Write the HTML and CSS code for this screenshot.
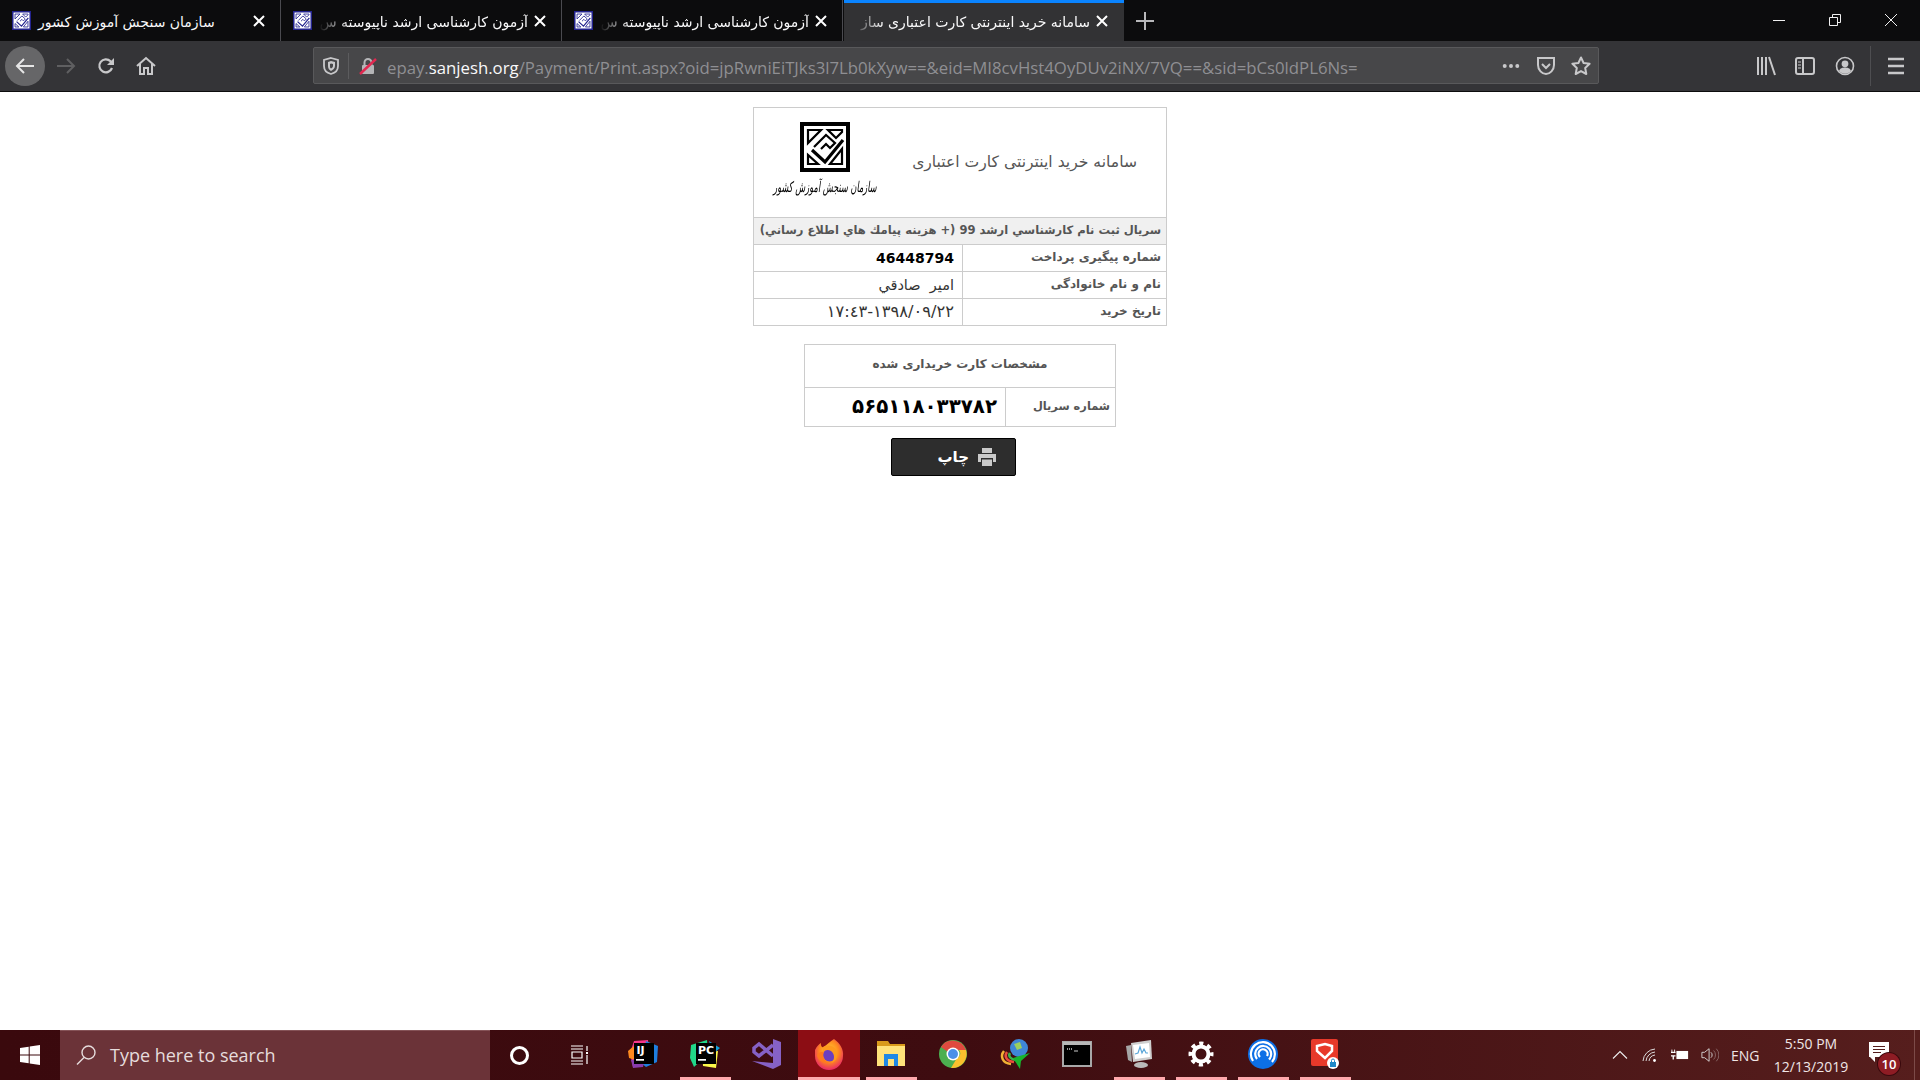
FILE: index.html
```html
<!DOCTYPE html>
<html lang="fa">
<head>
<meta charset="utf-8">
<title>سامانه خرید اینترنتی کارت اعتباری</title>
<link rel="stylesheet" href="styles.css">
</head>
<body>
<svg class="defs" width="0" height="0" aria-hidden="true">
  <defs>
    <symbol id="mark" viewBox="0 0 50 50">
      <path fill="currentColor" fill-rule="evenodd" d="M0 0H50V50H0ZM4 4V46H46V4Z"/>
      <g fill="none" stroke="currentColor" stroke-width="2.200">
        <path d="M8 8V21L21 8Z"/>
        <path d="M28 8H42V10L36 16Z"/>
        <path d="M8 33V42H18Z"/>
        <path d="M42 27V42H30Z"/>
        <path d="M14 25 26 13 35 21 30 26 26 22 21 27"/>
        <path stroke-width="3.200" d="M12 28 25 40 43 18"/>
      </g>
    </symbol>
    <symbol id="close" viewBox="0 0 16 16">
      <path fill="none" stroke="currentColor" stroke-width="2" d="M3 3 13 13M13 3 3 13"/>
    </symbol>
    <radialGradient id="ffg" cx="50%" cy="40%" r="62%">
      <stop offset="0" stop-color="#ffd43b"/>
      <stop offset=".55" stop-color="#ff8a1e"/>
      <stop offset="1" stop-color="#e8226c"/>
    </radialGradient>
  </defs>
</svg>

<header class="tabs">
  <div class="tab">
    <svg class="favicon"><use href="#mark"/></svg>
    <div class="label label-short">سازمان سنجش آموزش کشور</div>
    <svg class="tab-close"><use href="#close"/></svg>
  </div>
  <div class="tab">
    <svg class="favicon"><use href="#mark"/></svg>
    <div class="label label-fade">آزمون کارشناسی ارشد ناپیوسته س</div>
    <svg class="tab-close"><use href="#close"/></svg>
  </div>
  <div class="tab">
    <svg class="favicon"><use href="#mark"/></svg>
    <div class="label label-fade">آزمون کارشناسی ارشد ناپیوسته س</div>
    <svg class="tab-close"><use href="#close"/></svg>
  </div>
  <div class="tab tab-active">
    <div class="label label-fade">سامانه خرید اینترنتی کارت اعتباری ساز</div>
    <svg class="tab-close"><use href="#close"/></svg>
  </div>
  <svg class="new-tab" viewBox="0 0 18 18"><path fill="none" stroke="currentColor" stroke-width="2" d="M9 0V18M0 9H18"/></svg>
  <div class="win-controls">
    <svg class="win-btn" viewBox="0 0 12 12"><path stroke="currentColor" stroke-width="1" d="M0 6.500H12"/></svg>
    <svg class="win-btn" viewBox="0 0 12 12"><path fill="none" stroke="currentColor" stroke-width="1" d="M.5 3.500H8.500V11.500H.5ZM3.500 3.500V.5H11.500V8.500H8.500"/></svg>
    <svg class="win-btn" viewBox="0 0 12 12"><path fill="none" stroke="currentColor" stroke-width="1" d="M0 0 12 12M12 0 0 12"/></svg>
  </div>
</header>

<nav class="toolbar">
  <div class="tb-btn tb-back">
    <svg class="ico" viewBox="0 0 20 20"><path fill="none" stroke="#e6e6e6" stroke-width="2" d="M19 10H2M9 3 2 10 9 17"/></svg>
  </div>
  <div class="tb-btn">
    <svg class="ico" viewBox="0 0 20 20"><path fill="none" stroke="#5f5f61" stroke-width="2" d="M1 10H18M11 3 18 10 11 17"/></svg>
  </div>
  <div class="tb-btn">
    <svg class="ico" viewBox="0 0 20 20"><path fill="none" stroke="#c8c8ca" stroke-width="2.200" d="M16 12A6.500 6.500 0 1 1 14.500 5.200L17 7.500"/><path fill="#c8c8ca" d="M18 2V9H11Z"/></svg>
  </div>
  <div class="tb-btn tb-home">
    <svg class="ico" viewBox="0 0 20 20"><path fill="none" stroke="#c8c8ca" stroke-width="2" d="M1 10 10 2 19 10M4 8V18H8V12H12V18H16V8"/></svg>
  </div>
  <div class="urlbar">
    <div class="ub-shield">
      <svg class="ico-s" viewBox="0 0 16 18"><path fill="none" stroke="#c8c8ca" stroke-width="1.800" d="M8 1 15 3V9C15 13 12 16 8 17 4 16 1 13 1 9V3Z"/><path fill="#c8c8ca" d="M8 4 12 5V9C12 11 10 13 8 14 6 13 5 11 5 9V5Z"/><path fill="#474749" d="M8 6.500 10 7V9C10 10 9 11 8 11.500 7 11 7 10 7 9V7Z"/></svg>
    </div>
    <div class="ub-lock">
      <svg class="ico-s" viewBox="0 0 18 18"><rect x="3" y="8" width="12" height="9" rx="1" fill="#b5b5b7"/><path fill="none" stroke="#b5b5b7" stroke-width="2" d="M5.500 8V5.500A3.500 3.500 0 0 1 12.500 5.500V8"/><path stroke="#e22850" stroke-width="2.400" d="M1 17 17 2"/></svg>
    </div>
    <div class="url"><span class="url-dim">epay.</span><span class="url-host">sanjesh.org</span><span class="url-dim">/Payment/Print.aspx?oid=jpRwniEiTJks3l7Lb0kXyw==&amp;eid=MI8cvHst4OyDUv2iNX/7VQ==&amp;sid=bCs0ldPL6Ns=</span></div>
    <div class="ub-act">
      <svg class="ico-s" viewBox="0 0 20 6"><g fill="#c8c8ca"><circle cx="3" cy="3" r="2.200"/><circle cx="10" cy="3" r="2.200"/><circle cx="17" cy="3" r="2.200"/></g></svg>
    </div>
    <div class="ub-act">
      <svg class="ico" viewBox="0 0 20 20"><path fill="none" stroke="#c8c8ca" stroke-width="2" d="M2 2H18V9C18 14 14 18 10 18 6 18 2 14 2 9Z"/><path fill="none" stroke="#c8c8ca" stroke-width="2" d="M6 8 10 12 14 8"/></svg>
    </div>
    <div class="ub-act">
      <svg class="ico" viewBox="0 0 20 20"><path fill="none" stroke="#c8c8ca" stroke-width="2" stroke-linejoin="round" d="M10 1.500 12.600 7 18.600 7.800 14.200 12 15.300 18 10 15.100 4.700 18 5.800 12 1.400 7.800 7.400 7Z"/></svg>
    </div>
  </div>
  <div class="tb-right">
    <div class="tb-btn-r">
      <svg class="ico" viewBox="0 0 20 20"><path fill="none" stroke="#c8c8ca" stroke-width="2" d="M2 1V19M6 1V19M10 1V19M13 1 19 19"/></svg>
    </div>
    <div class="tb-btn-r">
      <svg class="ico" viewBox="0 0 20 20"><rect x="1" y="2" width="18" height="16" rx="2" fill="none" stroke="#c8c8ca" stroke-width="2"/><path stroke="#c8c8ca" stroke-width="2" d="M8 2V18"/><path stroke="#c8c8ca" d="M3 6H6M3 9H6M3 12H6"/></svg>
    </div>
    <div class="tb-btn-r">
      <svg class="ico" viewBox="0 0 20 20"><circle cx="10" cy="10" r="8.500" fill="none" stroke="#c8c8ca" stroke-width="1.600"/><circle cx="10" cy="7.800" r="3.400" fill="#c8c8ca"/><path fill="#c8c8ca" d="M4 15C5 12 7.500 11.500 10 11.500S15 12 16 15C14.500 17 12 17.700 10 17.700S5.500 17 4 15Z"/></svg>
    </div>
    <div class="tb-sep"></div>
    <div class="tb-menu">
      <svg class="ico" viewBox="0 0 20 20"><path stroke="#c8c8ca" stroke-width="2.400" d="M2 3H18M2 10H18M2 17H18"/></svg>
    </div>
  </div>
</nav>

<main class="page">
  <table class="info">
    <colgroup><col class="col-lab-1"><col></colgroup>
    <tbody>
      <tr class="row-head">
        <td colspan="2">
          <div class="head-flex">
            <div class="head-title">سامانه خرید اینترنتی کارت اعتباری</div>
            <div class="logo">
              <svg class="logo-mark"><use href="#mark"/></svg>
              <div class="logo-text">سازمان سنجش آموزش کشور</div>
            </div>
          </div>
        </td>
      </tr>
      <tr class="row-title"><td colspan="2">سريال ثبت نام كارشناسي ارشد 99 (+ هزينه پيامك هاي اطلاع رساني)</td></tr>
      <tr class="row">
        <td class="lab lab-1">شماره پیگیری پرداخت</td>
        <td class="val val-bold">46448794</td>
      </tr>
      <tr class="row">
        <td class="lab lab-1">نام و نام خانوادگی</td>
        <td class="val">امير &nbsp;صادقي</td>
      </tr>
      <tr class="row">
        <td class="lab lab-1">تاریخ خرید</td>
        <td class="val"><span class="visual date">١٧:٤٣-١٣٩٨/٠٩/٢٢</span></td>
      </tr>
    </tbody>
  </table>

  <table class="card">
    <colgroup><col class="col-lab-2"><col></colgroup>
    <tbody>
      <tr class="card-head"><td colspan="2">مشخصات کارت خریداری شده</td></tr>
      <tr class="card-row">
        <td class="lab lab-2">شماره سریال</td>
        <td class="val-serial"><span class="visual">۵۶۵۱۱۸۰۳۳۷۸۲</span></td>
      </tr>
    </tbody>
  </table>

  <button class="print" type="button">
    <svg class="print-ico" viewBox="0 0 20 20"><path fill="#c9c9c9" d="M5 1H15V6H5ZM1 7H19V15H16V11H4V15H1ZM5 12.500H15V19H5Z"/></svg>
    <span>چاپ</span>
  </button>
</main>

<footer class="taskbar">
  <div class="start">
    <svg class="win-logo" viewBox="0 0 20 20"><path fill="#fff" d="M0 3 8.700 1.700V9.500H0ZM9.700 1.500 20 0V9.500H9.700ZM0 10.500H8.700V18.300L0 17ZM9.700 10.500H20V20L9.700 18.500Z"/></svg>
  </div>
  <div class="search">
    <svg class="search-ico" viewBox="0 0 20 20"><circle cx="12.500" cy="7.500" r="6.500" fill="none" stroke="#e6dcdc" stroke-width="1.400"/><path stroke="#e6dcdc" stroke-width="1.400" d="M8 12.500 1 19.500"/></svg>
    <span>Type here to search</span>
  </div>
  <div class="cortana"><span class="ring"></span></div>
  <div class="taskview">
    <svg class="tv-ico" viewBox="0 0 20 20"><path fill="none" stroke="#fff" stroke-width="1.200" d="M1 1H13M1 4H13M2 7H12V13H2ZM1 16H13M1 19H13M17 1V6M17 10V19"/><path stroke="#fff" stroke-width="2" d="M16 8H18"/></svg>
  </div>
  <div class="apps">
    <div class="app">
      <div class="app-ico">
        <svg class="tile" viewBox="0 0 32 32"><path fill="#f5368a" d="M7 3 21 2 22 14 6 29 3 15Z"/><path fill="#fd8a1f" d="M1 13 7 8 8 22 2 20Z"/><path fill="#1e7fe0" d="M19 3 31 8 30 24 19 29 14 25Z"/><path fill="#8a3cae" d="M4 22 18 20 16 29 6 30Z"/><rect x="7" y="5" width="20" height="21" fill="#000"/><text class="tile-txt" x="9.500" y="16">IJ</text><rect x="9" y="21" width="8" height="1.700" fill="#fff"/></svg>
      </div>
      <span class="ind ind-none"></span>
    </div>
    <div class="app">
      <div class="app-ico">
        <svg class="tile" viewBox="0 0 32 32"><path fill="#21d789" d="M2 7 18 2 19 16 5 29 1 20Z"/><path fill="#fcf84a" d="M13 15 29 13 27 30 14 28Z"/><path fill="#12a0d8" d="M20 3 31 10 24 16Z"/><rect x="7" y="5" width="20" height="21" fill="#000"/><text class="tile-txt" x="9" y="16">PC</text><rect x="9" y="21" width="8" height="1.700" fill="#fff"/></svg>
      </div>
      <span class="ind"></span>
    </div>
    <div class="app">
      <div class="app-ico">
        <svg class="tile" viewBox="0 0 32 32"><path fill="#8661c5" d="M22 1 30 4V27L22 31 1 23 22 25Z"/><path fill="none" stroke="#8661c5" stroke-width="3.500" d="M22 7 8 18 3 14V10L8 6 22 18"/></svg>
      </div>
      <span class="ind ind-none"></span>
    </div>
    <div class="app app-active">
      <div class="app-ico">
        <svg class="tile" viewBox="0 0 32 32"><path fill="url(#ffg)" d="M2 12C4 8 6 6 8 5 7.500 8 9 10 11 9 14 6 17 4 21 1 27 5 31 12 30 18A14 14 0 0 1 2 18C2 16 2 14 2 12Z"/><circle cx="16.500" cy="17" r="6.500" fill="#6b3fc0"/><path fill="#ff9a1e" d="M10 9C15 6 23 8 24 14 25 20 22 24 18 25 22 22 22 16 18 13 15 11 12 12 10 14Z"/><path fill="#ff7a1e" d="M4 17C6 14 9 13 11 14 9 18 11 23 16 25 11 26 5 23 4 17Z"/></svg>
      </div>
      <span class="ind"></span>
    </div>
    <div class="app">
      <div class="app-ico">
        <svg class="tile" viewBox="0 0 32 32"><path fill="#d99a1b" d="M2 3H13L15 6H30V27H2Z"/><path fill="#ffe27a" d="M2 8H30V28H2Z"/><path fill="#1e88e5" d="M9 16H23V28H19V21H13V28H9Z"/></svg>
      </div>
      <span class="ind"></span>
    </div>
    <div class="app">
      <div class="app-ico">
        <svg class="tile" viewBox="0 0 32 32"><circle cx="16" cy="16" r="14" fill="#4caf50"/><path fill="#e04a3f" d="M4 9A14 14 0 0 1 29 12H16A5 5 0 0 0 11 14Z"/><path fill="#fbc02d" d="M29 12A14 14 0 0 1 14 30L20 20A5 5 0 0 0 22 12Z"/><circle cx="16" cy="16" r="6.500" fill="#fff"/><circle cx="16" cy="16" r="5" fill="#4a90e8"/></svg>
      </div>
      <span class="ind ind-none"></span>
    </div>
    <div class="app">
      <div class="app-ico">
        <svg class="tile" viewBox="0 0 32 32"><path fill="none" stroke="#f2b134" stroke-width="2.500" d="M12 26C3 25 1 18 5 13"/><path fill="none" stroke="#e84d3d" stroke-width="2.500" d="M15 24C7 23 5 18 8 14"/><path fill="none" stroke="#3bb44a" stroke-width="2.500" d="M17 22C11 21 9 18 11 15"/><circle cx="20" cy="10" r="9" fill="#3f87d6"/><path fill="#9ccf5e" d="M15 6 21 4 23 10 18 12Z"/><path fill="#18b52e" d="M31 15 14 20 21 31 22 23Z"/></svg>
      </div>
      <span class="ind ind-none"></span>
    </div>
    <div class="app">
      <div class="app-ico">
        <svg class="tile" viewBox="0 0 32 32"><rect x="2" y="4" width="28" height="24" fill="#000" stroke="#a8a8a8" stroke-width="2"/><rect x="2" y="4" width="28" height="3" fill="#b8b8b8"/><path stroke="#ccc" stroke-width="1.500" stroke-dasharray="1 1" d="M6 11H12"/><path stroke="#ccc" stroke-width="1" d="M13 13H17"/></svg>
      </div>
      <span class="ind ind-none"></span>
    </div>
    <div class="app">
      <div class="app-ico">
        <svg class="tile" viewBox="0 0 32 32"><path fill="#cfcfcf" d="M8 5 28 2 29 21 10 24Z"/><path fill="#fff" d="M10 7 26 5 27 19 12 21Z"/><path fill="none" stroke="#5aa6d8" stroke-width="1.200" d="M12 16 15 15 17 9 19 15 21 11 23 15 25 15"/><path fill="#a6a6a6" d="M3 8 8 7 9 24 5 22Z"/><ellipse cx="18" cy="27" rx="7" ry="3" fill="#b9b9b9"/></svg>
      </div>
      <span class="ind"></span>
    </div>
    <div class="app">
      <div class="app-ico">
        <svg class="tile" viewBox="0 0 32 32"><circle cx="16" cy="16" r="7.500" fill="none" stroke="#fff" stroke-width="4"/><circle cx="16" cy="16" r="10.500" fill="none" stroke="#fff" stroke-width="4" stroke-dasharray="4.120 4.120" stroke-dashoffset="2.060"/></svg>
      </div>
      <span class="ind"></span>
    </div>
    <div class="app">
      <div class="app-ico">
        <svg class="tile" viewBox="0 0 32 32"><circle cx="16" cy="16" r="15" fill="#0d6fe6"/><g fill="none" stroke="#fff" stroke-width="2.200"><path d="M6 23A12 12 0 1 1 25 24"/><path d="M10 21A8 8 0 1 1 22 21.500"/><path d="M13 19A4.500 4.500 0 1 1 20 18"/></g></svg>
      </div>
      <span class="ind"></span>
    </div>
    <div class="app">
      <div class="app-ico">
        <svg class="tile" viewBox="0 0 32 32"><rect x="2" y="1" width="27" height="27" rx="2" fill="#e8392a"/><path fill="none" stroke="#fff" stroke-width="2.500" d="M16 20 8 13 8 8 16 6 23 8V13Z"/><circle cx="24" cy="25" r="6" fill="#fff"/><rect x="21" y="24" width="6" height="5" fill="#1e88c8"/><path fill="none" stroke="#1e88c8" d="M22.500 24V22.500A1.500 1.500 0 0 1 25.500 22.500V24"/></svg>
      </div>
      <span class="ind"></span>
    </div>
  </div>
  <div class="tray">
    <svg class="tray-ico" viewBox="0 0 16 16"><path fill="none" stroke="#eee" stroke-width="1.100" d="M1 11.500 8 4.500 15 11.500"/></svg>
    <svg class="tray-ico tray-gap" viewBox="0 0 16 16"><g fill="none" stroke="#ddd"><path d="M1 14A13 13 0 0 1 13 2"/><path d="M4 14A10 10 0 0 1 13 5"/><path d="M7 14A7 7 0 0 1 13 8"/></g><circle cx="12.500" cy="13.500" r="1.400" fill="#fff"/></svg>
    <svg class="tray-ico tray-gap" viewBox="0 0 20 16"><rect x="6" y="3.500" width="13" height="9" fill="#fff"/><path stroke="#fff" stroke-width="1.500" d="M0 5H5M0 9H5M2.500 9V13"/><path stroke="#fff" d="M1 2V5M4 2V5"/></svg>
    <svg class="tray-ico tray-gap" viewBox="0 0 20 16"><path fill="none" stroke="#ddd" d="M1 5H4L9 1V15L4 11H1ZM11 5A4 4 0 0 1 11 11"/><path fill="none" stroke="#8a6a6a" d="M14 3A7 7 0 0 1 14 13M17 1A10 10 0 0 1 17 15"/></svg>
    <span class="eng">ENG</span>
    <div class="clock">
      <span>5:50 PM</span>
      <span>12/13/2019</span>
    </div>
    <div class="notif">
      <svg class="notif-ico" viewBox="0 0 20 20"><path fill="#fff" fill-rule="evenodd" d="M0 0H20V15H6L6 20 1 15H0ZM4 4V5H16V4ZM4 7V8H16V7ZM4 10V11H12V10Z"/></svg>
      <span class="badge">10</span>
    </div>
    <div class="show-desktop"></div>
  </div>
</footer>
</body>
</html>
```

FILE: styles.css
```css
* { box-sizing: border-box; }
html, body { margin: 0; padding: 0; height: 100%; }
body {
  width: 1920px;
  height: 1080px;
  display: flex;
  flex-direction: column;
  overflow: hidden;
  background: #fff;
  font-family: "DejaVu Sans", sans-serif;
}
.defs { position: absolute; }

/* tabs */
.tabs {
  height: 41px;
  flex: none;
  display: flex;
  align-items: stretch;
  background: #0c0c0d;
  color: #f9f9fa;
}
.tab {
  width: 281px;
  display: flex;
  align-items: center;
  padding: 2px 13px 0 12px;
  border-right: 1px solid #4a4a4f;
  flex: none;
}
.favicon {
  width: 19px;
  height: 19px;
  flex: none;
  color: #23238e;
  background: #fff;
  margin-top: -3px;
}
.label {
  flex: 1;
  min-width: 0;
  margin: 0 4px 0 7px;
  direction: rtl;
  white-space: nowrap;
  font-size: 14px;
  line-height: 24px;
}
.label-short { text-align: left; }
.label-fade {
  -webkit-mask-image: linear-gradient(to right, transparent 0, #000 30px);
  mask-image: linear-gradient(to right, transparent 0, #000 30px);
}
.tab-close { width: 16px; height: 16px; flex: none; color: #fff; margin-top: -2px; }
.tab-active {
  width: 280px;
  margin-left: 1px;
  background: #323234;
  border-top: 3px solid #0a84ff;
  border-right: 0;
  padding: 0 14px 0 9px;
}
.tab-active .label { margin-left: 0; }
.new-tab { width: 18px; height: 18px; margin: 12px 0 0 12px; color: #b8b8ba; flex: none; }
.win-controls { margin-left: auto; display: flex; align-items: center; padding: 0 23px 0 0; gap: 44px; }
.win-btn { width: 12px; height: 12px; color: #f0f0f0; margin-top: -2px; }

/* toolbar */
.toolbar {
  height: 51px;
  flex: none;
  display: flex;
  align-items: center;
  padding: 0 0 1px 5px;
  background: #343437;
  border-bottom: 1px solid #0c0c0d;
}
.tb-btn {
  width: 40.500px;
  height: 40px;
  flex: none;
  display: flex;
  align-items: center;
  justify-content: center;
}
.tb-back { border-radius: 50%; background: #666668; width: 40px; margin-right: .5px; }
.tb-home { padding-right: 2px; }
.ico { width: 20px; height: 20px; }
.ico-s { width: 18px; height: 18px; }
.urlbar {
  width: 1286px;
  height: 37px;
  margin-left: 146px;
  flex: none;
  display: flex;
  align-items: center;
  background: #474749;
  border: 1px solid #59595b;
  border-radius: 2px;
}
.ub-shield {
  width: 35px;
  height: 26px;
  display: flex;
  align-items: center;
  justify-content: center;
  padding-right: 1px;
  border-right: 1px solid #5c5c5e;
  flex: none;
}
.ub-lock { width: 38px; flex: none; display: flex; justify-content: center; padding-right: 1px; }
.url {
  flex: 1;
  min-width: 0;
  font-family: "Open Sans", sans-serif;
  font-size: 16.750px;
  white-space: nowrap;
  padding-top: 3px;
}
.url-dim { color: #8f8f93; }
.url-host { color: #f9f9fa; }
.ub-act { width: 35px; flex: none; display: flex; justify-content: center; align-items: center; }
.tb-right { display: flex; align-items: center; margin-left: 147px; }
.tb-btn-r { width: 39.500px; display: flex; justify-content: center; flex: none; }
.tb-sep { width: 1px; height: 40px; background: #4e4e51; margin-left: 5px; }
.tb-menu { width: 50px; display: flex; justify-content: center; flex: none; }

/* page */
.page {
  flex: 1;
  min-height: 0;
  display: flex;
  flex-direction: column;
  align-items: center;
  padding-top: 15px;
  direction: rtl;
  color: #555;
}
table { border-collapse: collapse; table-layout: fixed; }
td { border: 1px solid #ccc; padding: 0; }
.col-lab-1 { width: 204px; }
.col-lab-2 { width: 110px; }
.info { width: 414px; font-size: 12px; }
.row-head { height: 110px; }
.head-flex { display: flex; align-items: center; justify-content: space-between; padding: 0 29px 0 20px; }
.head-title { font-size: 15.600px; color: #555; padding-bottom: 2px; }
.logo { width: 102px; height: 82px; display: flex; flex-direction: column; align-items: center; padding-bottom: 5px; }
.logo-mark { width: 50px; height: 50px; color: #000; flex: none; }
.logo-text {
  margin-top: 3px;
  font-size: 8.200px;
  line-height: 24px;
  font-style: italic;
  color: #000;
  white-space: nowrap;
  transform: scaleY(1.800);
}
.row-title { height: 27px; background: #f0f0f0; font-weight: 700; font-size: 11.550px; }
.row-title td { padding: 0 5px 2px; white-space: nowrap; }
.row { height: 27px; }
.lab { font-weight: 700; font-size: 12px; }
.lab-1 { padding: 0 5px 2px 0; }
.val { padding-right: 8px; color: #333; font-size: 14.500px; }
.val-bold { color: #000; font-weight: 700; font-size: 14px; }
.visual { direction: ltr; unicode-bidi: bidi-override; display: inline-block; }
.date { font-size: 16.300px; line-height: 20px; }
.card { width: 312px; margin-top: 18px; font-size: 12px; }
.card-head { height: 43px; text-align: center; font-weight: 700; }
.card-head td { padding-bottom: 4px; }
.card-row { height: 39px; }
.lab-2 { padding: 0 5px 2px 0; font-size: 11.400px; }
.val-serial { padding-right: 8px; font-weight: 700; font-size: 19.800px; color: #000; line-height: 24px; }
.print {
  width: 125px;
  height: 38px;
  margin: 11px 13px 0 0;
  display: flex;
  align-items: center;
  justify-content: flex-start;
  gap: 8px;
  padding: 0 18px 0 0;
  border: 1px solid #000;
  border-radius: 2px;
  background: #2d2d2d;
  color: #fff;
  font-family: "DejaVu Sans", sans-serif;
  font-weight: 700;
  font-size: 15px;
}
.print-ico { width: 20px; height: 20px; flex: none; }

/* taskbar */
.taskbar {
  height: 50px;
  flex: none;
  display: flex;
  align-items: stretch;
  background: linear-gradient(to right, #3a090d 0, #3e0c10 50%, #561e1d 100%);
  color: #fff;
}
.start { width: 60px; flex: none; display: flex; align-items: center; justify-content: center; }
.win-logo { width: 20px; height: 20px; }
.search {
  width: 430px;
  flex: none;
  display: flex;
  align-items: center;
  padding: 0 0 2px 16px;
  gap: 14px;
  background: #6b3338;
  border-top: 1px solid #855357;
  color: #e6dcdc;
  font-family: "Open Sans", sans-serif;
  font-size: 18px;
}
.search-ico { width: 20px; height: 20px; flex: none; }
.cortana { width: 58px; flex: none; display: flex; align-items: center; justify-content: center; }
.ring { width: 19px; height: 19px; border: 3px solid #fff; border-radius: 50%; }
.taskview { width: 64px; flex: none; display: flex; align-items: center; justify-content: center; }
.tv-ico { width: 20px; height: 20px; }
.apps { display: flex; flex: none; }
.app { width: 62px; flex: none; display: flex; flex-direction: column; align-items: center; }
.app-active { background: #8c0d14; }
.app-active .ind { width: 100%; }
.app-ico { flex: 1; display: flex; align-items: center; justify-content: center; }
.tile { width: 32px; height: 32px; }
.tile-txt { font-family: "DejaVu Sans", sans-serif; font-weight: 700; font-size: 11px; fill: #fff; }
.ind { width: 51px; height: 3px; background: #ffa9ad; flex: none; }
.ind-none { background: transparent; }
.tray { margin-left: auto; display: flex; align-items: center; }
.tray-ico { width: 18px; height: 16px; flex: none; }
.tray-gap { margin-left: 12px; }
.eng {
  margin-left: 12px;
  width: 30px;
  font-family: "Open Sans", sans-serif;
  font-size: 14px;
  color: #f0e6e6;
}
.clock {
  width: 80px;
  margin-left: 10px;
  display: flex;
  flex-direction: column;
  align-items: center;
  gap: 3px;
  font-family: "Open Sans", sans-serif;
  font-size: 14px;
  line-height: 20px;
  color: #f0e6e6;
}
.notif {
  position: relative;
  width: 53px;
  margin-left: 10px;
  height: 100%;
  display: flex;
  align-items: center;
  justify-content: flex-start;
  padding-left: 8px;
}
.notif-ico { width: 20px; height: 20px; margin-top: -6px; }
.badge {
  position: absolute;
  left: 17px;
  top: 23px;
  width: 22px;
  height: 22px;
  border-radius: 50%;
  background: #8e1c24;
  box-shadow: 0 0 0 1px #3a090d;
  font-family: "Open Sans", sans-serif;
  font-size: 13px;
  line-height: 22px;
  text-align: center;
  font-weight: 600;
  color: #fff;
}
.show-desktop { width: 6px; height: 100%; border-left: 1px solid #7c4a48; }
```
